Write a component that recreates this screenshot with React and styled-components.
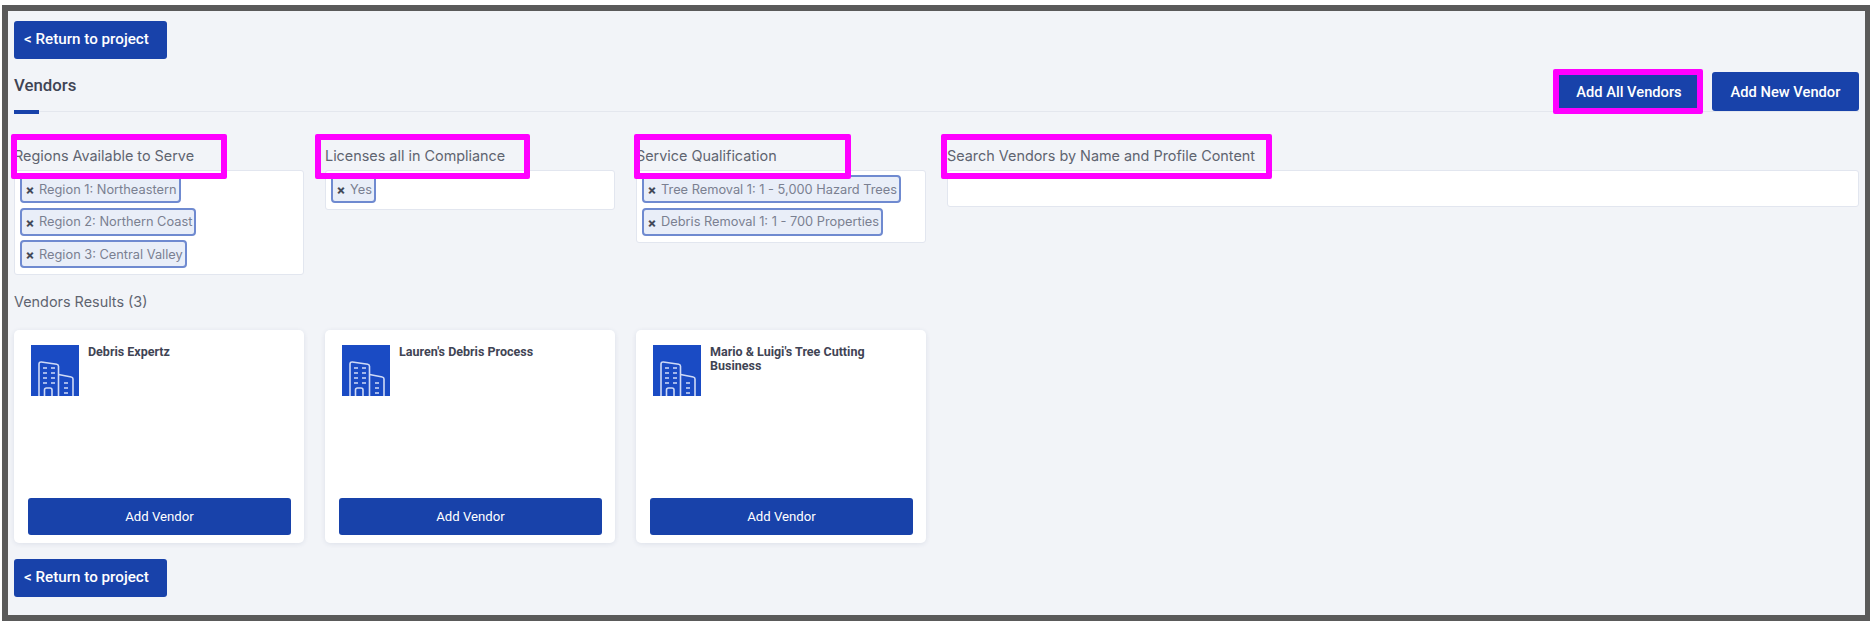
import React from 'react';
import styled, { createGlobalStyle } from 'styled-components';

const GlobalStyle = createGlobalStyle`
  html, body {
    margin: 0;
    padding: 0;
    background: #ffffff;
    font-family: 'Inter', 'Liberation Sans', sans-serif;
  }
`;

const Frame = styled.div`
  box-sizing: border-box;
  width: 1868px;
  height: 616px;
  margin: 5px 0 0 2px;
  border: 6px solid #5a5a5a;
  border-right-width: 5px;
  background: #f2f4f8;
  padding: 10px 0 0 6px;
`;

const BlueButton = styled.button`
  box-sizing: border-box;
  background: #1842aa;
  color: #ffffff;
  border: none;
  border-radius: 3px;
  font-family: 'Roboto', 'Liberation Sans', sans-serif;
  font-weight: 500;
  cursor: pointer;
`;

const ReturnButton = styled(BlueButton)`
  display: block;
  width: 153px;
  height: 38px;
  padding: 0 0 2px 10px;
  font-size: 15.2px;
  text-align: left;
`;

const Header = styled.div`
  display: flex;
  justify-content: space-between;
  align-items: flex-end;
  width: 1845px;
  height: 52px;
  border-bottom: 1px solid #e4e7ee;
`;

const Tab = styled.div`
  align-self: stretch;
  position: relative;
  padding-top: 16px;
  font-family: 'Roboto', 'Liberation Sans', sans-serif;
  font-size: 16.8px;
  font-weight: 500;
  color: #3f4454;
  &::after {
    content: '';
    position: absolute;
    left: 0;
    bottom: -3px;
    width: 25px;
    height: 4px;
    background: #1842aa;
  }
`;

const HeaderActions = styled.div`
  display: flex;
  gap: 15px;
  align-self: flex-end;
`;

const ActionButton = styled(BlueButton)`
  height: 39px;
  width: ${p => p.$width}px;
  padding: 0 0 0 ${p => p.$indent || 0}px;
  font-size: 14.7px;
  position: relative;
`;

const ButtonHighlight = styled.span`
  position: absolute;
  left: -6px;
  right: -6px;
  top: -3px;
  bottom: -3px;
  border: 6px solid #ff00ff;
  border-radius: 2px;
`;

const Filters = styled.div`
  display: grid;
  grid-template-columns: repeat(6, 290px);
  column-gap: 21px;
  align-items: start;
  width: 1845px;
  margin-top: 32px;
`;

const Field = styled.div`
  position: relative;
  grid-column: span ${p => p.$span || 1};
`;

const FieldLabel = styled.div`
  height: 26px;
  line-height: 24px;
  font-size: 14.4px;
  color: #5f6470;
  white-space: nowrap;
`;

const LabelHighlight = styled.span`
  position: absolute;
  box-sizing: border-box;
  left: ${p => p.$left}px;
  top: -10px;
  width: ${p => p.$width}px;
  height: 45px;
  border: 6px solid #ff00ff;
  border-radius: 2px;
`;

const SelectBox = styled.div`
  box-sizing: border-box;
  display: flex;
  flex-direction: column;
  align-items: flex-start;
  gap: 4.5px;
  min-height: 37px;
  padding: 4px 5px 6px;
  background: #ffffff;
  border: 1px solid #e2e6ef;
  border-radius: 3px;
`;

const Chip = styled.div`
  box-sizing: border-box;
  display: flex;
  align-items: center;
  gap: 4px;
  height: 28px;
  padding: 0 2px 0 3px;
  background: #e9eef8;
  border: 2px solid #6f8ad0;
  border-radius: 4px;
  font-size: 12.8px;
  color: #7a8091;
  white-space: nowrap;
`;

const ChipRemove = styled.span`
  width: 10px;
  text-align: center;
  font-weight: 800;
  font-size: 13px;
  color: #444a58;
`;

const ResultsLabel = styled.div`
  margin-top: 17px;
  line-height: 20px;
  font-size: 14.4px;
  color: #5f6470;
`;

const Cards = styled.div`
  display: flex;
  gap: 21px;
  margin-top: 18px;
`;

const Card = styled.div`
  box-sizing: border-box;
  display: flex;
  flex-direction: column;
  justify-content: space-between;
  width: 290px;
  height: 213px;
  padding: 15px 14px 8px;
  background: #ffffff;
  border-radius: 5px;
  box-shadow: 0 1px 5px rgba(40, 60, 110, 0.1);
`;

const CardTop = styled.div`
  display: flex;
  gap: 9px;
  padding-left: 3px;
`;

const LogoBox = styled.svg`
  flex: none;
  display: block;
  width: 48px;
  height: 51px;
`;

const CardTitle = styled.div`
  max-width: 170px;
  font-family: 'Roboto', 'Liberation Sans', sans-serif;
  font-size: 12.5px;
  font-weight: 700;
  line-height: 14px;
  color: #3f4454;
`;

const AddButton = styled(BlueButton)`
  width: 263px;
  height: 37px;
  font-size: 13.2px;
  font-weight: 400;
`;

const BottomReturn = styled(ReturnButton)`
  margin-top: 16px;
`;

const BuildingLogo = () => (
  <LogoBox viewBox="0 0 48 51">
    <rect width="48" height="51" fill="#1a4bc4" />
    <g fill="none" stroke="#cfdaf6" strokeWidth="1.6">
      <path d="M8 51V19a2 2 0 0 1 2.300-2l15.500 2.200a2 2 0 0 1 1.700 2V51" />
      <path d="M27.500 29.500l12.800 2.500a2 2 0 0 1 1.700 2V51" />
      <path d="M13.500 51V45a2 2 0 0 1 2-2h3.500a2 2 0 0 1 2 2V51" />
    </g>
    <g stroke="#cfdaf6" strokeWidth="1.700">
      <path d="M12 23h4M20 23h4M12 28h4M20 28h4M12 33h4M20 33h4M12 38h4M20 38h4" />
      <path d="M33 38h4M33 43h4M33 48h4" />
    </g>
  </LogoBox>
);

const filters = [
  { label: 'Regions Available to Serve', left: -3, box: 216, chips: ['Region 1: Northeastern', 'Region 2: Northern Coast', 'Region 3: Central Valley'] },
  { label: 'Licenses all in Compliance', left: -10, box: 215, chips: ['Yes'] },
  { label: 'Service Qualification', left: -2, box: 217, chips: ['Tree Removal 1: 1 - 5,000 Hazard Trees', 'Debris Removal 1: 1 - 700 Properties'] },
  { label: 'Search Vendors by Name and Profile Content', left: -6, box: 331, span: 3, chips: [] },
];

const vendors = ['Debris Expertz', "Lauren's Debris Process", "Mario & Luigi's Tree Cutting Business"];

const App = () => {
  return (
    <>
      <GlobalStyle />
      <Frame>
        <ReturnButton>&lt; Return to project</ReturnButton>
        <Header>
          <Tab>Vendors</Tab>
          <HeaderActions>
            <ActionButton $width={138} $indent={2}>
              Add All Vendors
              <ButtonHighlight />
            </ActionButton>
            <ActionButton $width={147}>Add New Vendor</ActionButton>
          </HeaderActions>
        </Header>
        <Filters>
          {filters.map(f => (
            <Field key={f.label} $span={f.span}>
              <FieldLabel>{f.label}</FieldLabel>
              <LabelHighlight $left={f.left} $width={f.box} />
              <SelectBox>
                {f.chips.map(c => (
                  <Chip key={c}>
                    <ChipRemove>×</ChipRemove>
                    {c}
                  </Chip>
                ))}
              </SelectBox>
            </Field>
          ))}
        </Filters>
        <ResultsLabel>Vendors Results (3)</ResultsLabel>
        <Cards>
          {vendors.map(v => (
            <Card key={v}>
              <CardTop>
                <BuildingLogo />
                <CardTitle>{v}</CardTitle>
              </CardTop>
              <AddButton>Add Vendor</AddButton>
            </Card>
          ))}
        </Cards>
        <BottomReturn>&lt; Return to project</BottomReturn>
      </Frame>
    </>
  );
};

export default App;
